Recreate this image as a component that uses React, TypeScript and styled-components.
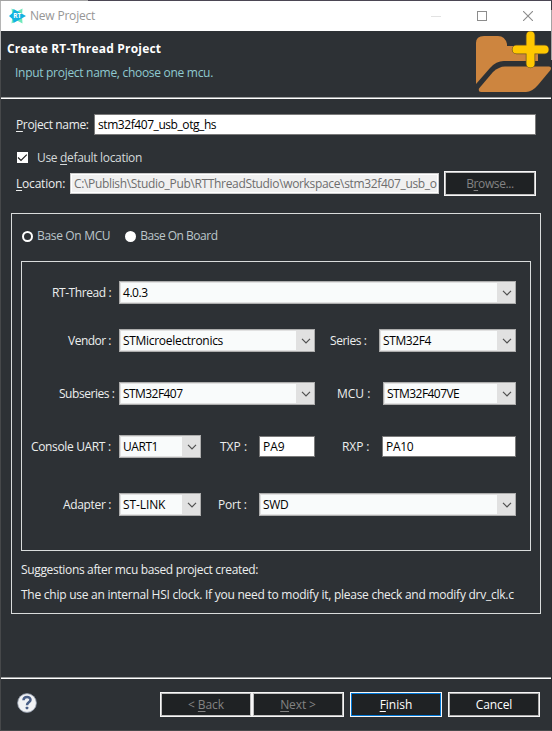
import React from 'react';
import styled, { createGlobalStyle } from 'styled-components';

const Global = createGlobalStyle`
  * { box-sizing: border-box; }
  body { margin: 0; background: #2d3135; }
`;

const Desktop = styled.div`
  width: 552px;
  height: 731px;
  padding: 1px;
  background:
    linear-gradient(to right, #a3a3a3 88px, #4b4653 88px) 0 0 / 552px 1px no-repeat,
    linear-gradient(#b5b5b5 60px, #46484a 60px) 0 0 / 1px 731px no-repeat,
    linear-gradient(#3c3a41 10px, #a3a3a3 10px, #a3a3a3 60px, #2b2e33 60px) 551px 0 / 1px 731px no-repeat,
    #47494b;
  font-family: 'Open Sans', 'Noto Sans', sans-serif;
  font-size: 12px;
  line-height: 16px;
  color: #eceeee;
`;

const Dialog = styled.div`
  display: flex;
  flex-direction: column;
  height: 729px;
  background: #2d3135;
`;

const Text = styled.span<{ $track?: number }>`
  display: block;
  white-space: pre;
  letter-spacing: ${(p) => p.$track ?? 0}px;
`;

const Mnemonic = styled.span`
  text-decoration: underline;
  text-decoration-thickness: 1px;
  text-underline-offset: 2px;
  text-decoration-skip-ink: none;
`;

const TitleBar = styled.div`
  display: flex;
  align-items: center;
  height: 30px;
  padding-left: 8px;
  background: #fff;
  color: #969696;
`;

const Title = styled(Text)`
  flex: 1;
  padding-left: 4px;
`;

const Caption = styled.div`
  display: flex;
  width: 46px;
  justify-content: center;
`;

const Header = styled.div`
  display: flex;
  justify-content: space-between;
  height: 68px;
  flex: none;
  border-bottom: 1px solid #fff;
  box-shadow: inset 0 -1px #9b9d9e;
`;

const HeaderText = styled.div`
  padding: 10px 0 0 6px;
`;

const Heading = styled(Text)`
  font-weight: bold;
  color: #fff;
`;

const Message = styled(Text)`
  padding: 8px 0 0 8px;
  color: #8fc9d0;
`;

const Content = styled.div`
  flex: 1;
  padding: 15px 10px 0;
`;

const FieldRow = styled.div`
  display: flex;
  align-items: center;
  padding: 0 5px;
`;

const NameLabel = styled(Text)`
  width: 78px;
`;

const LocationLabel = styled(Text)`
  width: 54px;
`;

const Field = styled.div<{ $width: number; $disabled?: boolean }>`
  width: ${(p) => p.$width}px;
  height: 21px;
  padding: 2px 2px 0 3px;
  overflow: hidden;
  border: 1px solid ${(p) => (p.$disabled ? '#cccccc' : '#7a7a7a')};
  box-shadow: inset 0 0 0 1px #fff;
  background: ${(p) => (p.$disabled ? '#f0f0f0' : '#fff')};
  color: ${(p) => (p.$disabled ? '#6d6d6d' : '#000')};
`;

const Button = styled.div<{ $tone?: 'disabled' | 'default'; $gap?: number }>`
  display: flex;
  justify-content: center;
  width: 92px;
  height: 25px;
  flex: none;
  padding-top: 4px;
  margin-left: ${(p) => p.$gap ?? 0}px;
  border: 1px solid #f7f7f7;
  box-shadow: inset 0 0 0 1px ${(p) => (p.$tone === 'default' ? '#0078d7' : p.$tone === 'disabled' ? '#bfbfbf' : '#adadad')};
  background: #1f2224;
  color: ${(p) => (p.$tone === 'disabled' ? '#838383' : '#fff')};
`;

const CheckRow = styled.div`
  display: flex;
  align-items: flex-start;
  gap: 9px;
  height: 16px;
  margin: 15px 0 5px;
  padding-left: 6px;
  color: #d5dadb;
`;

const CheckSlot = styled.div`
  display: flex;
  padding-top: 2px;
`;

const Group = styled.div`
  height: 401px;
  margin-top: 17px;
  border: 1px solid #d9dcdc;
  padding: 14px 9px 0;
`;

const RadioRow = styled.div`
  display: flex;
  align-items: center;
  height: 16px;
  padding-left: 1px;
  color: #bcc6ca;
`;

const Radio = styled.span<{ $checked?: boolean; $gap?: number }>`
  width: 11px;
  height: 11px;
  margin: 0 4px 0 ${(p) => p.$gap ?? 0}px;
  border-radius: 50%;
  border: 2px solid #fff;
  background: ${(p) => (p.$checked ? '#2d3135' : '#fff')};
`;

const Panel = styled.div`
  height: 290px;
  margin-top: 17px;
  border: 1px solid #d9dcdc;
  padding-top: 19px;
`;

const FormRow = styled.div<{ $after: number }>`
  display: flex;
  align-items: center;
  height: 23px;
  margin-bottom: ${(p) => p.$after}px;
`;

const Label = styled(Text)<{ $indent: number; $width: number }>`
  width: ${(p) => p.$width}px;
  padding-left: ${(p) => p.$indent}px;
  flex: none;
`;

const Combo = styled.div<{ $width: number }>`
  display: flex;
  width: ${(p) => p.$width}px;
  height: 23px;
  flex: none;
  border: 1px solid #adadad;
  padding: 1px 0;
  background: #e1e1e1;
  color: #000;
`;

const ComboValue = styled.div`
  flex: 1;
  margin-left: 1px;
  padding: 2px 0 0 2px;
  background: #f9fbfb;
`;

const ComboArrow = styled.div`
  display: flex;
  align-items: center;
  justify-content: flex-end;
  width: 18px;
  padding-right: 3px;
`;

const Note = styled(Text)<{ $top: number }>`
  margin-top: ${(p) => p.$top}px;
`;

const Footer = styled.div`
  display: flex;
  height: 53px;
  flex: none;
  padding: 14px 11px 0 15px;
  border-top: 1px solid #9b9d9e;
  box-shadow: inset 0 1px #fff;
`;

const HelpSlot = styled.div`
  flex: 1;
`;

const Logo = () => (
  <svg width="17" height="18" viewBox="0 0 17 18">
    <path d="M2.500 1.500 8 4.500 13.500 1.500 13 9 13.500 16.500 8 13.500 2.500 16.500 3.500 9Z" fill="#6fe8ba" />
    <path d="M0 9 4 5.500 4.500 2 17 9 4.500 16 4 12.500Z" fill="#12b2e2" />
    <text x="8.300" y="11.400" textAnchor="middle" fontSize="6.500" fontWeight="bold" fill="#fff">RT</text>
  </svg>
);

const FolderIcon = () => (
  <svg width="76" height="66" viewBox="475 31 76 66">
    <path d="M476 89V43Q476 36 484 36H498Q505 36 507 44V46H538V61H504Q496 61 490 68L476 84Z" fill="#cd853f" />
    <path d="M475 91.500V88.500L489 71.500Q496 61.500 504 61.500H540V64.500H504Q497 66 492 72L476 92Z" fill="#2d3135" />
    <path d="M481 92Q478 92 479 88.500L493 72Q499 66.500 505 66.500H549Q552 66.500 550.500 70L538 85Q532 92 526 92Z" fill="#cd853f" />
    <path d="M530.500 35.500V63.500M516.500 49.500H544.500" stroke="#6b5524" strokeWidth="9.500" strokeLinecap="round" />
    <path d="M530.500 35.500V63.500M516.500 49.500H544.500" stroke="#ffc800" strokeWidth="8" strokeLinecap="round" />
  </svg>
);

const HelpIcon = () => (
  <svg width="22" height="22" viewBox="0 0 22 22">
    <circle cx="11" cy="11" r="9.400" fill="#f1f2f4" stroke="#8d97a8" strokeWidth=".8" />
    <path d="M7.500 8.200C7.600 3.800 14.600 3.900 14.500 7.900C14.400 10.400 11 10.300 11 13.200" fill="none" stroke="#4a5f86" strokeWidth="2.500" />
    <rect x="9.700" y="14.700" width="2.600" height="2.500" rx=".6" fill="#4a5f86" />
  </svg>
);

const Checkbox = () => (
  <svg width="11" height="11" viewBox="0 0 11 11">
    <rect width="11" height="11" fill="#fff" />
    <path d="M1 5.500 4 8.400 9.800 2.600" fill="none" stroke="#222" strokeWidth="1.200" />
  </svg>
);

function Select({ width, value, track }: { width: number; value: string; track?: number }) {
  return (
    <Combo $width={width}>
      <ComboValue><Text $track={track}>{value}</Text></ComboValue>
      <ComboArrow>
        <svg width="10" height="6" viewBox="0 0 10 6">
          <path d="M1 .8 5 4.800 9 .8" fill="none" stroke="#505050" strokeWidth="1.200" />
        </svg>
      </ComboArrow>
    </Combo>
  );
}

export default function App() {
  return (
    <Desktop>
      <Global />
      <Dialog>
        <TitleBar>
          <Logo />
          <Title $track={-0.2}>New Project</Title>
          <Caption><svg width="10" height="10"><path d="M0 5.500H10" stroke="#e2e2e2" /></svg></Caption>
          <Caption><svg width="10" height="10"><rect x=".5" y=".5" width="9" height="9" fill="none" stroke="#8c8c8c" /></svg></Caption>
          <Caption><svg width="10" height="10"><path d="M0 0 10 10M10 0 0 10" stroke="#8c8c8c" strokeWidth="1.100" /></svg></Caption>
        </TitleBar>
        <Header>
          <HeaderText>
            <Heading $track={0.2}>Create RT-Thread Project</Heading>
            <Message $track={-0.29}>Input project name, choose one mcu.</Message>
          </HeaderText>
          <FolderIcon />
        </Header>
        <Content>
          <FieldRow>
            <NameLabel $track={-0.36}><Mnemonic>P</Mnemonic>roject name:</NameLabel>
            <Field $width={442}><Text $track={-0.43}>stm32f407_usb_otg_hs</Text></Field>
          </FieldRow>
          <CheckRow>
            <CheckSlot><Checkbox /></CheckSlot>
            <Text $track={-0.32}>Use <Mnemonic>d</Mnemonic>efault location</Text>
          </CheckRow>
          <FieldRow>
            <LocationLabel $track={-0.2}><Mnemonic>L</Mnemonic>ocation:</LocationLabel>
            <Field $width={369} $disabled>
              <Text $track={-0.34}>{'C:\\Publish\\Studio_Pub\\RTThreadStudio\\workspace\\stm32f407_usb_o'}</Text>
            </Field>
            <Button $tone="disabled" $gap={5}><Text $track={-0.4}>B<Mnemonic>r</Mnemonic>owse...</Text></Button>
          </FieldRow>
          <Group>
            <RadioRow>
              <Radio $checked />
              <Text $track={-0.33}>Base On MCU</Text>
              <Radio $gap={15} />
              <Text $track={-0.5}>Base On Board</Text>
            </RadioRow>
            <Panel>
              <FormRow $after={25}>
                <Label $indent={30} $width={97} $track={-0.42}>RT-Thread :</Label>
                <Select width={397} value="4.0.3" track={-0.45} />
              </FormRow>
              <FormRow $after={30}>
                <Label $indent={46} $width={97} $track={-0.5}>Vendor :</Label>
                <Select width={196} value="STMicroelectronics" track={-0.3} />
                <Label $indent={15} $width={64} $track={-0.45}>Series :</Label>
                <Select width={137} value="STM32F4" track={-0.38} />
              </FormRow>
              <FormRow $after={30}>
                <Label $indent={37} $width={97} $track={-0.46}>Subseries :</Label>
                <Select width={196} value="STM32F407" track={-0.56} />
                <Label $indent={22} $width={68}>MCU :</Label>
                <Select width={133} value="STM32F407VE" track={-0.56} />
              </FormRow>
              <FormRow $after={35}>
                <Label $indent={9} $width={97} $track={-0.35}>Console UART :</Label>
                <Select width={82} value="UART1" track={-0.45} />
                <Label $indent={19} $width={58}>TXP :</Label>
                <Field $width={56}><Text>PA9</Text></Field>
                <Label $indent={27} $width={67} $track={-0.1}>RXP :</Label>
                <Field $width={134}><Text $track={-0.3}>PA10</Text></Field>
              </FormRow>
              <FormRow $after={0}>
                <Label $indent={41} $width={97} $track={-0.34}>Adapter :</Label>
                <Select width={82} value="ST-LINK" track={-0.1} />
                <Label $indent={17} $width={58} $track={-0.2}>Port :</Label>
                <Select width={257} value="SWD" track={-0.3} />
              </FormRow>
            </Panel>
            <Note $top={11} $track={-0.34}>Suggestions after mcu based project created:</Note>
            <Note $top={9} $track={-0.255}>The chip use an internal HSI clock. If you need to modify it, please check and modify drv_clk.c</Note>
          </Group>
        </Content>
        <Footer>
          <HelpSlot><HelpIcon /></HelpSlot>
          <Button $tone="disabled"><Text $track={-0.1}>{'< '}<Mnemonic>B</Mnemonic>ack</Text></Button>
          <Button $tone="disabled"><Text $track={-0.1}><Mnemonic>N</Mnemonic>{'ext >'}</Text></Button>
          <Button $tone="default" $gap={6}><Text><Mnemonic>F</Mnemonic>inish</Text></Button>
          <Button $gap={6}><Text $track={-0.1}>Cancel</Text></Button>
        </Footer>
      </Dialog>
    </Desktop>
  );
}
